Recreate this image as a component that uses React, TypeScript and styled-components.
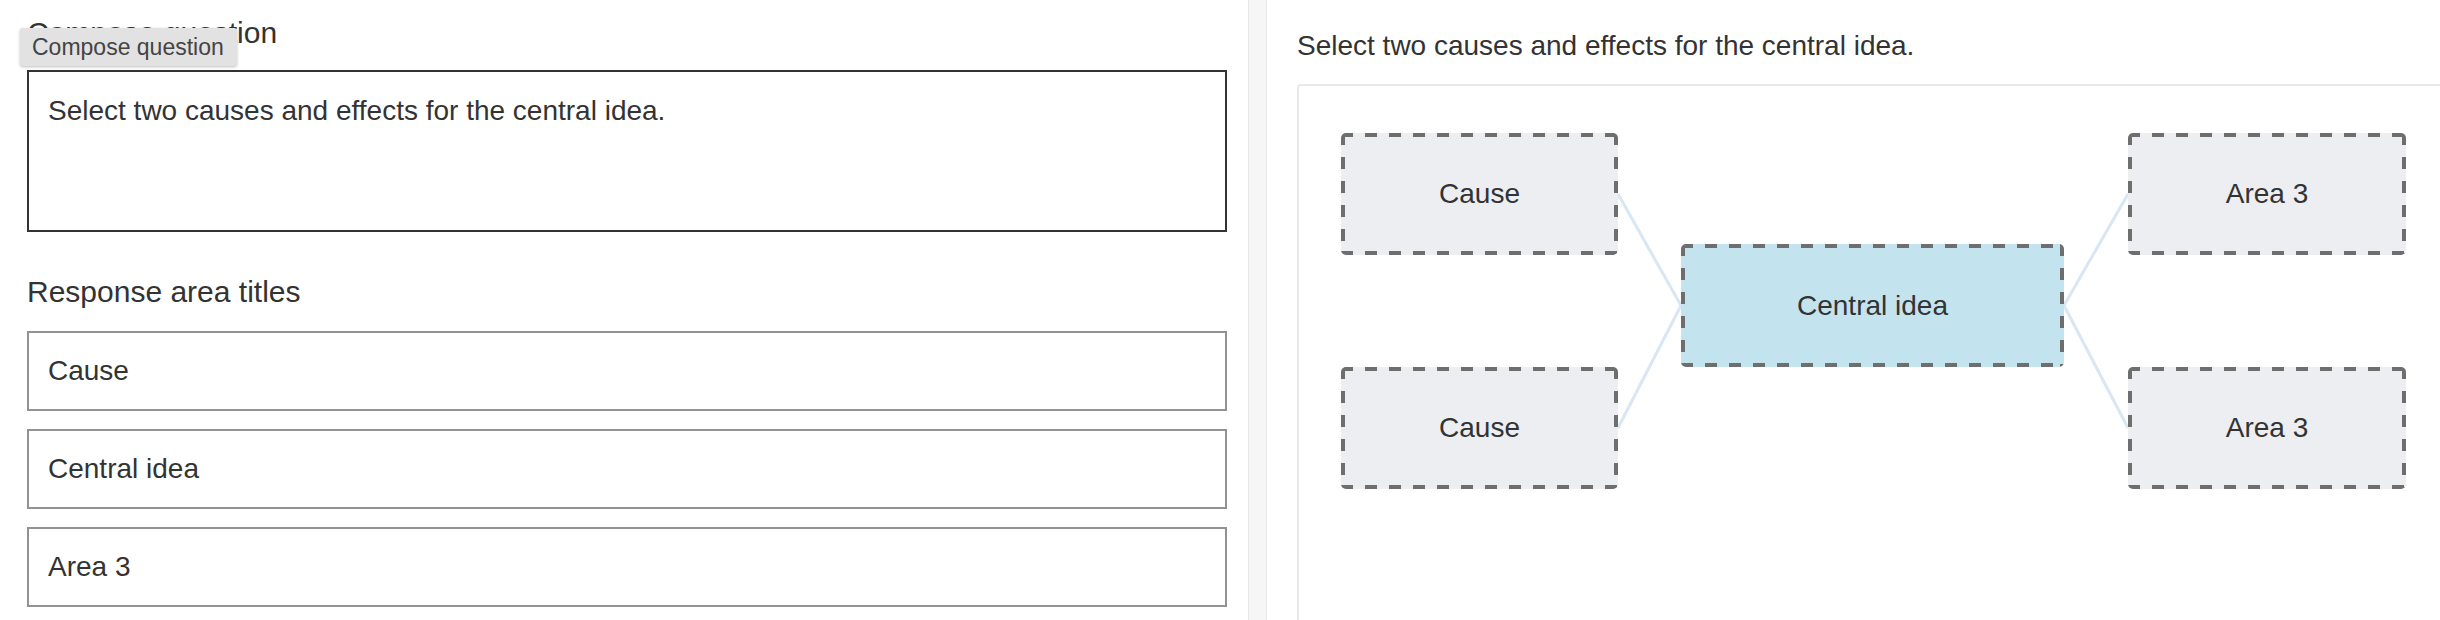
import styled, { createGlobalStyle } from "styled-components";

const GlobalStyle = createGlobalStyle`
    html, body{
        margin: 0;
        padding: 0;
        background-color: #FFFFFF;
        overflow: hidden;
    }
    body{
        font-family: "Liberation Sans", Arial, sans-serif;
        color: #333333;
    }
    *{
        box-sizing: border-box;
    }
`

const Page = styled.div`
    display: flex;
    width: 2440px;
    height: 620px;
    overflow: hidden;
`

const LeftPane = styled.section`
    position: relative;
    flex: 0 0 1248px;
    padding: 15px 21px 0 27px;
    display: flex;
    flex-direction: column;
`

const Heading = styled.h2<{ $gap?: number }>`
    margin: ${(p) => p.$gap ?? 0}px 0 0;
    font-size: 30px;
    font-weight: 400;
    line-height: 36px;
    color: #333333;
`

const Tooltip = styled.div`
    position: absolute;
    left: 20px;
    top: 28px;
    height: 38px;
    padding: 0 13px 0 12px;
    background-color: #E2E2E2;
    border-radius: 3px;
    box-shadow: 0 1px 3px rgba(0,0,0,.25);
    font-size: 23px;
    line-height: 38px;
    color: #444444;
    white-space: nowrap;
`

const QuestionBox = styled.textarea`
    margin-top: 19px;
    width: 1200px;
    height: 162px;
    padding: 19px;
    border: 2px solid #333333;
    border-radius: 0;
    resize: none;
    outline: none;
    font-family: inherit;
    font-size: 28px;
    line-height: 1.4;
    color: #333333;
`

const TitleList = styled.div`
    margin-top: 21px;
    display: flex;
    flex-direction: column;
    gap: 18px;
`

const TitleInput = styled.input`
    width: 1200px;
    height: 80px;
    padding: 0 19px;
    border: 2px solid #929292;
    border-radius: 0;
    outline: none;
    font-family: inherit;
    font-size: 28px;
    color: #333333;
`

const Divider = styled.div`
    flex: 0 0 19px;
    background-color: #F6F6F6;
    border-left: 1px solid #E8E8E8;
    border-right: 1px solid #E8E8E8;
`

const RightPane = styled.section`
    flex: 1;
    min-width: 0;
    padding: 26px 0 0 30px;
`

const Prompt = styled.p`
    margin: 0;
    font-size: 28px;
    line-height: 1.4;
    white-space: nowrap;
`

const Board = styled.div`
    margin-top: 19px;
    width: 1153px;
    height: 560px;
    border: 2px solid #E9E9E9;
    border-radius: 4px;
`

const Diagram = styled.div`
    position: relative;
    display: flex;
    align-items: flex-start;
    padding: 47px 42px;
    gap: 63px;
`

const Column = styled.div`
    position: relative;
    z-index: 1;
    display: flex;
    flex-direction: column;
    gap: 112px;
`

// long dashes, like the 4px dashed frame of the drop areas
const dash = "#6E6E6E";
const Node = styled.div<{ $width: number; $central?: boolean }>`
    position: relative;
    z-index: 1;
    width: ${(p) => p.$width}px;
    height: ${(p) => (p.$central ? 123 : 122)}px;
    margin-top: ${(p) => (p.$central ? 111 : 0)}px;
    display: flex;
    align-items: center;
    justify-content: center;
    border-radius: 5px;
    background:
        repeating-linear-gradient(90deg, ${dash} 0 12px, transparent 12px 24px) left top / 100% 4px no-repeat,
        repeating-linear-gradient(90deg, ${dash} 0 12px, transparent 12px 24px) left bottom / 100% 4px no-repeat,
        repeating-linear-gradient(180deg, ${dash} 0 12px, transparent 12px 24px) left top / 4px 100% no-repeat,
        repeating-linear-gradient(180deg, ${dash} 0 12px, transparent 12px 24px) right top / 4px 100% no-repeat,
        ${(p) => (p.$central ? "#C3E4EE" : "#EDEEF2")};
    font-size: 28px;
    color: #333333;
`

const Links = styled.svg`
    position: absolute;
    left: 0;
    top: 0;
    width: 100%;
    height: 100%;
    z-index: 0;
    pointer-events: none;
`

const titles = ["Cause", "Central idea", "Area 3"];

const links: [number, number, number, number][] = [
    [319, 108, 382, 219.5],
    [319, 342, 382, 219.5],
    [765, 219.5, 829, 108],
    [765, 219.5, 829, 342],
];

function App() {
    return <>
        <GlobalStyle />
        <Page>
            <LeftPane>
                <Heading>Compose question</Heading>
                <Tooltip>Compose question</Tooltip>
                <QuestionBox readOnly defaultValue="Select two causes and effects for the central idea." />
                <Heading $gap={42}>Response area titles</Heading>
                <TitleList>
                    {titles.map((t) => <TitleInput key={t} readOnly defaultValue={t} />)}
                </TitleList>
            </LeftPane>
            <Divider />
            <RightPane>
                <Prompt>Select two causes and effects for the central idea.</Prompt>
                <Board>
                    <Diagram>
                        <Links>
                            {links.map(([x1, y1, x2, y2], i) =>
                                <line key={i} x1={x1} y1={y1} x2={x2} y2={y2} stroke="#D9E6F4" strokeWidth={3} />)}
                        </Links>
                        <Column>
                            <Node $width={277}>Cause</Node>
                            <Node $width={277}>Cause</Node>
                        </Column>
                        <Node $width={383} $central>Central idea</Node>
                        <Column style={{ marginLeft: 1 }}>
                            <Node $width={278}>Area 3</Node>
                            <Node $width={278}>Area 3</Node>
                        </Column>
                    </Diagram>
                </Board>
            </RightPane>
        </Page>
    </>
}

export default App;
